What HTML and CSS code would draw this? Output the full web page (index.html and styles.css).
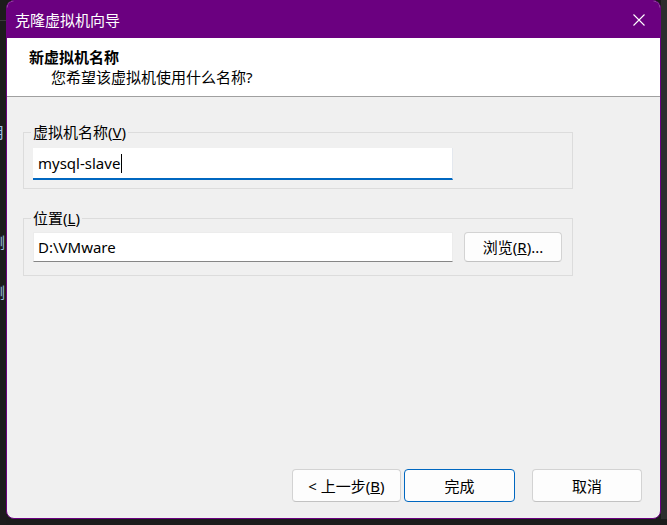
FILE: index.html
```html
<!DOCTYPE html>
<html lang="zh-CN">
<head>
<meta charset="utf-8">
<title>克隆虚拟机向导</title>
<link rel="stylesheet" href="styles.css">
</head>
<body>
<div class="desktop">
  <div class="bg-left">
    <div class="bg-line"></div>
    <span class="bg-glyph g1">月</span>
    <span class="bg-glyph g2">测</span>
    <span class="bg-glyph g3">测</span>
  </div>
  <div class="window">
    <div class="titlebar">
      <span class="title">克隆虚拟机向导</span>
      <svg class="close" width="12" height="12" viewBox="0 0 12 12"><path d="M0.5 0.5 L11.5 11.5 M11.5 0.5 L0.5 11.5" stroke="#fff" stroke-width="1.1" fill="none"/></svg>
    </div>
    <div class="header">
      <div class="h-title">新虚拟机名称</div>
      <div class="h-sub">您希望该虚拟机使用什么名称?</div>
    </div>
    <div class="body">
      <fieldset class="group g-name">
        <legend>虚拟机名称(<u>V</u>)</legend>
        <div class="field focused">mysql-slave<span class="caret"></span></div>
      </fieldset>
      <fieldset class="group g-loc">
        <legend>位置(<u>L</u>)</legend>
        <div class="row">
          <div class="field plain">D:\VMware</div>
          <button class="btn browse">浏览(<u>R</u>)...</button>
        </div>
      </fieldset>
      <div class="footer">
        <button class="btn back">&lt; 上一步(<u>B</u>)</button>
        <button class="btn primary">完成</button>
        <button class="btn cancel">取消</button>
      </div>
    </div>
  </div>
  <div class="bg-right"></div>
</div>
</body>
</html>
```

FILE: styles.css
```css
html, body {
  margin: 0;
  padding: 0;
}
body {
  background: #1b1b1b;
  width: 667px;
  height: 525px;
  overflow: hidden;
  font-family: "Noto Sans", "Noto Sans CJK SC", sans-serif;
  font-size: 15px;
  color: #000;
}
.desktop {
  display: flex;
  align-items: flex-start;
  height: 525px;
}
.bg-left {
  width: 6px;
  height: 525px;
  flex: none;
  position: relative;
  overflow: hidden;
  background: #1c1c1c;
}
.bg-line {
  position: absolute;
  left: 0;
  top: 20px;
  width: 6px;
  height: 1px;
  background: #3a3a3a;
}
.bg-glyph {
  position: absolute;
  left: -10px;
  font-family: "Noto Sans CJK SC", sans-serif;
  font-size: 15px;
  line-height: 16px;
  color: #9cc0e4;
}
.g1 { top: 124px; }
.g2 { top: 234px; }
.g3 { top: 284px; }
.bg-right {
  flex: 1;
  height: 519px;
  background: #2d2d2d;
}
.window {
  width: 655px;
  height: 519px;
  flex: none;
  box-sizing: border-box;
  border: 1px solid #6b0080;
  border-radius: 8px;
  overflow: hidden;
  display: flex;
  flex-direction: column;
  background: #f0f0f0;
}
.titlebar {
  height: 37px;
  flex: none;
  background: #6b0080;
  color: #fff;
  display: flex;
  align-items: center;
  justify-content: space-between;
  padding: 0 15px 0 8px;
}
.title {
  font-family: "Noto Sans CJK SC", sans-serif;
  line-height: 20px;
}
.close {
  display: block;
}
.header {
  flex: none;
  height: 49px;
  padding-top: 9px;
  background: #fff;
  border-bottom: 1px solid #a0a0a0;
}
.h-title {
  padding-left: 22px;
  font-weight: bold;
  line-height: 20px;
}
.h-sub {
  padding-left: 44px;
  line-height: 20px;
}
.body {
  flex: 1;
  display: flex;
  flex-direction: column;
  padding-left: 16px;
}
.group {
  margin: 0;
  width: 550px;
  box-sizing: border-box;
  border: 1px solid #dcdcdc;
  min-inline-size: 0;
}
.group legend {
  margin-left: -2px;
  padding: 0 2px;
  line-height: 20px;
}
.g-name {
  margin-top: 25px;
  padding: 6px 0 8px 9px;
}
.g-loc {
  margin-top: 19px;
  padding: 4px 0 13px 9px;
}
.field {
  background: #fff;
  width: 420px;
  box-sizing: border-box;
  display: flex;
  align-items: center;
  padding-left: 5px;
  white-space: nowrap;
}
.focused {
  height: 32px;
  border-bottom: 2px solid #0067c0;
  border-right: 1px solid #e4e8ee;
}
.plain {
  height: 30px;
  border: 1px solid #ececec;
  border-bottom-color: #868686;
  padding-left: 4px;
}
.caret {
  display: inline-block;
  width: 1px;
  height: 19px;
  background: #000;
  margin-left: 1px;
}
.row {
  display: flex;
  gap: 11px;
}
.btn {
  font: inherit;
  color: #000;
  background: #fdfdfd;
  border: 1px solid #d3d3d3;
  border-bottom-color: #c2c2c2;
  border-radius: 4px;
  padding: 0;
  box-sizing: border-box;
  line-height: 20px;
}
.browse {
  width: 98px;
  height: 30px;
}
.footer {
  margin-top: auto;
  display: flex;
  justify-content: flex-end;
  padding: 0 18px 16px 0;
}
.footer .btn {
  height: 33px;
}
.back {
  width: 109px;
}
.primary {
  width: 111px;
  margin-left: 3px;
  border: 1px solid #0067c0;
}
.cancel {
  width: 110px;
  margin-left: 17px;
}
```
